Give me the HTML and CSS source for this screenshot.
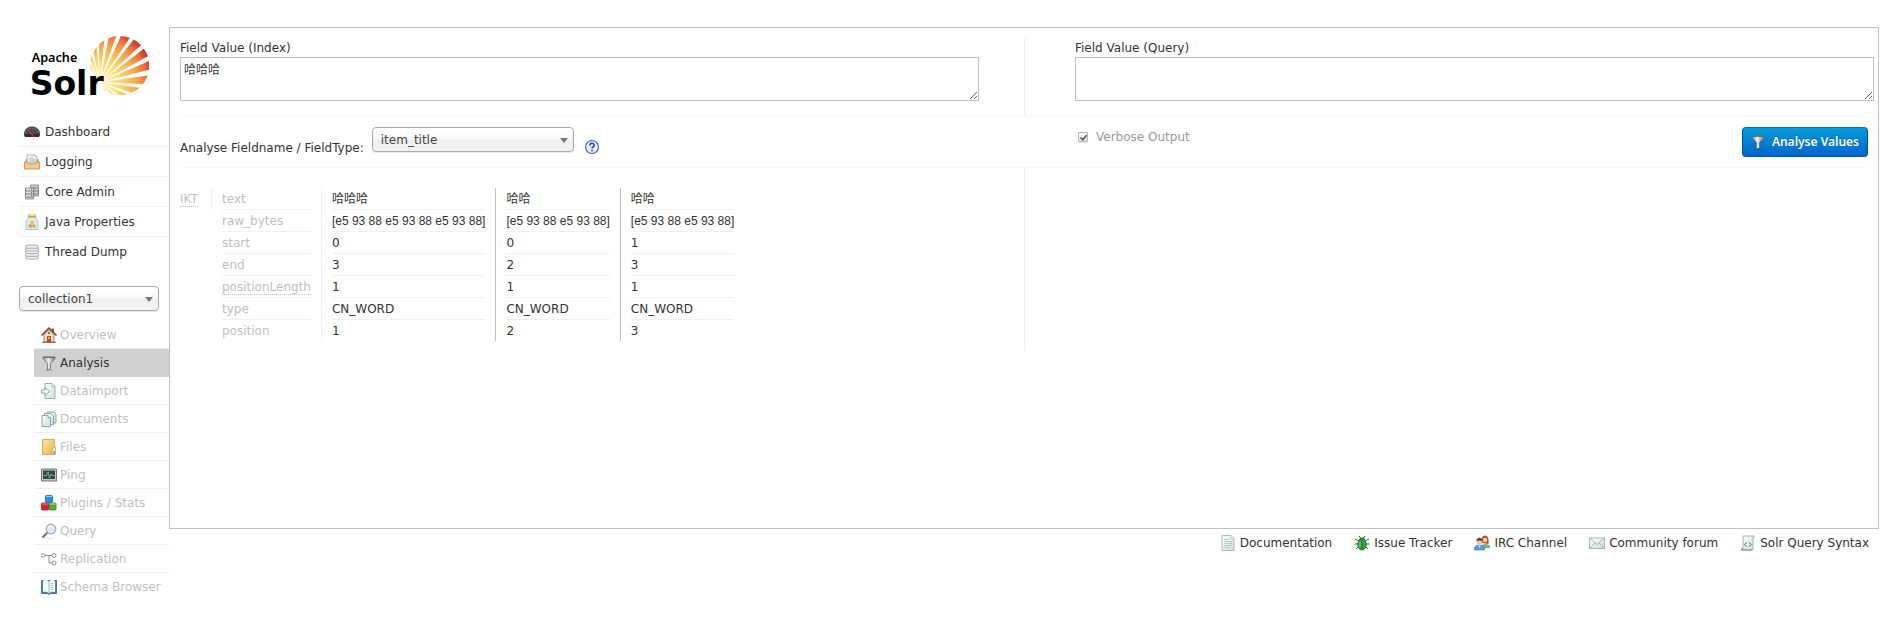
FILE: index.html
```html
<!DOCTYPE html>
<html lang="en">
<head>
    <meta charset="UTF-8">
    <meta name="viewport" content="width=device-width, initial-scale=1.0">
    <title>Solr Admin</title>
    <link rel="stylesheet" href="styles.css">
</head>
<body>
    <!-- shared gradients and the funnel icon -->
    <svg class="defs" width="0" height="0" aria-hidden="true">
        <defs>
            <linearGradient id="paper" x1="0" y1="0" x2="1" y2="1">
                <stop offset="0" stop-color="#ffffff"/>
                <stop offset="1" stop-color="#c9dedd"/>
            </linearGradient>
            <linearGradient id="metal" x1="0" y1="0" x2="1" y2="0">
                <stop offset="0" stop-color="#88888d"/>
                <stop offset=".45" stop-color="#f0f0f0"/>
                <stop offset="1" stop-color="#77777c"/>
            </linearGradient>
            <linearGradient id="folder" x1="0" y1="0" x2="1" y2="1">
                <stop offset="0" stop-color="#fbe7a6"/>
                <stop offset="1" stop-color="#e3b64c"/>
            </linearGradient>
            <radialGradient id="flame" gradientUnits="userSpaceOnUse" cx="0" cy="0" r="165">
                <stop offset="0" stop-color="#fff8c8"/>
                <stop offset=".35" stop-color="#fddc70"/>
                <stop offset=".65" stop-color="#f6a850"/>
                <stop offset=".85" stop-color="#e8743a"/>
                <stop offset="1" stop-color="#c92d2c"/>
            </radialGradient>
            <clipPath id="disc">
                <circle cx="359" cy="137" r="89"/>
            </clipPath>
            <symbol id="funnel" viewBox="0 0 16 16">
                <path d="M2 2h12v1.500L9.500 8.500v5.500l-3 1V8.500L2 3.500z" fill="url(#metal)" stroke="#6a6a70" stroke-width=".8"/>
                <path d="M2 2.300h12" stroke="#66666c"/>
                <path d="M4 15.300h8" stroke="#000" stroke-opacity=".2"/>
            </symbol>
        </defs>
    </svg>

    <div class="wrapper">
        <aside class="sidebar">
            <a class="logo" href="#" aria-label="Apache Solr">
                <svg width="130" height="84" viewBox="57 21 390 252">
                    <g clip-path="url(#disc)">
                        <g transform="translate(300 187)" fill="url(#flame)">
                            <path d="M0 0L190-10V10Z" transform="rotate(-121)"/>
                            <path d="M0 0L190-10V10Z" transform="rotate(-110)"/>
                            <path d="M0 0L190-12V12Z" transform="rotate(-99)"/>
                            <path d="M0 0L190-13V13Z" transform="rotate(-88)"/>
                            <path d="M0 0L190-14V14Z" transform="rotate(-75)"/>
                            <path d="M0 0L190-16V16Z" transform="rotate(-61)"/>
                            <path d="M0 0L190-16V16Z" transform="rotate(-47)"/>
                            <path d="M0 0L190-15V15Z" transform="rotate(-33)"/>
                            <path d="M0 0L190-15V15Z" transform="rotate(-19)"/>
                            <path d="M0 0L190-17V17Z" transform="rotate(-3)"/>
                            <path d="M0 0L190-17V17Z" transform="rotate(13)"/>
                            <path d="M0 0L190-17V17Z" transform="rotate(29)"/>
                            <path d="M0 0L190-15V15Z" transform="rotate(45)"/>
                            <path d="M0 0L190-13V13Z" transform="rotate(60)"/>
                        </g>
                    </g>
                    <text class="logo-top" x="95" y="126">Apache</text>
                    <text class="logo-name" x="89" y="224">Solr</text>
                </svg>
            </a>

            <nav>
                <ul class="menu">
                    <li><a href="#">
                        <svg class="icon" viewBox="0 0 16 16"><path d="M0 10C0 0 16 0 16 10l-1 3H1z" fill="#4a4a50"/><path d="M2 9.500C3 2.500 13 2.500 14 9.500" fill="none" stroke="#9a9aa0" stroke-dasharray="1 2"/><path d="M0 10h16l-1 3H1z" fill="#2f2f33"/><path d="M4 6l6 7" stroke="#e02424" stroke-width="1.300"/></svg>
                        Dashboard</a></li>
                    <li><a href="#">
                        <svg class="icon" viewBox="0 0 16 16"><path d="M2 5h12l1.500 5h-15z" fill="#d99a5c"/><path d="M3 1h8l2 2v8H3z" fill="url(#paper)" stroke="#8eabaa" stroke-width=".8"/><path d="M5 4h4M5 6h6M5 8h6" stroke="#8fb5b5" stroke-width=".8"/><path d="M.5 8H4l1 2h6l1-2h3.500v7H.5z" fill="#f3c692" stroke="#c98645" stroke-width=".8"/></svg>
                        Logging</a></li>
                    <li><a href="#">
                        <svg class="icon" viewBox="0 0 16 16"><path d="M6.500 1h8v11h-8z" fill="#c9d0cf" stroke="#777" stroke-width=".8"/><path d="M7 4h7M7 7h7M7 10h7" stroke="#777"/><path d="M1.500 4h8v11h-8z" fill="#dde2e2" stroke="#777" stroke-width=".8"/><path d="M2 7h7M2 10h7M2 13h7" stroke="#777"/><path d="M7 5.500h1M7 8.500h1M7 11.500h1" stroke="#3a9c4a"/></svg>
                        Core Admin</a></li>
                    <li><a href="#">
                        <svg class="icon" viewBox="0 0 16 16"><path d="M4 3h8v1.500l2 2.500v8.500H2V7l2-2.500z" fill="#d9eaf8" stroke="#94b5d3" stroke-width=".8"/><path d="M4 .5h8v3H4z" fill="#dba72f"/><path d="M4.500 1.500h7" stroke="#f9dc85"/><circle cx="8" cy="8.500" r="2" fill="#e9bd55"/><circle cx="6.300" cy="12" r="2" fill="#dba94a"/><circle cx="9.800" cy="12" r="2" fill="#e4b453"/></svg>
                        Java Properties</a></li>
                    <li><a href="#">
                        <svg class="icon" viewBox="0 0 16 16" fill="#f2f2f2" stroke="#a5a5a5" stroke-width=".9"><rect x="1.500" y="12" width="13" height="3" rx="1.500"/><rect x="1.500" y="9.300" width="13" height="3" rx="1.500"/><rect x="1.500" y="6.600" width="13" height="3" rx="1.500"/><rect x="1.500" y="3.900" width="13" height="3" rx="1.500"/><rect x="1.500" y="1.200" width="13" height="3" rx="1.500"/></svg>
                        Thread Dump</a></li>
                </ul>

                <div class="select core-select">
                    <select aria-label="Core Selector">
                        <option>collection1</option>
                    </select>
                </div>

                <ul class="submenu">
                    <li><a href="#">
                        <svg class="icon" viewBox="0 0 16 16"><path d="M3 7.500L8 3l5 4.500V15H3z" fill="#f4dfc8" stroke="#8a6244" stroke-width=".8"/><path d="M11 1.500h2v4h-2z" fill="#a5522c"/><path d="M.5 8.500L8 1l7.500 7.500" fill="none" stroke="#75452f" stroke-width="1.500"/><path d="M6 9h4v6.500H6z" fill="#b84a20"/><path d="M7 10h2v2H7z" fill="#f1ae42"/><circle cx="8" cy="6" r="1" fill="#764a2d"/><path d="M1 15.300h14" stroke="#8a6244"/></svg>
                        Overview</a></li>
                    <li class="active"><a href="#">
                        <svg class="icon"><use href="#funnel"/></svg>
                        Analysis</a></li>
                    <li><a href="#">
                        <svg class="icon" viewBox="0 0 16 16"><path d="M4 .5h7l3 3v12H4z" fill="url(#paper)" stroke="#8eaaa9" stroke-width=".9"/><path d="M11 .5v3h3" fill="#fff" stroke="#8eaaa9" stroke-width=".8"/><path d="M.5 7H4V4.500L8.500 8.500 4 12.500V10H.5z" fill="#fff" stroke="#789b9a" stroke-width=".9"/></svg>
                        Dataimport</a></li>
                    <li><a href="#">
                        <svg class="icon" viewBox="0 0 16 16" fill="url(#paper)" stroke="#7fa09f" stroke-width=".9"><path d="M6 1h7l2 2v9H6z"/><path d="M3.500 2.500h7l2 2v9h-9z"/><path d="M1 4.500h6l2.500 2.500v8.500H1z"/><path d="M7 4.500V7h2.500"/></svg>
                        Documents</a></li>
                    <li><a href="#">
                        <svg class="icon" viewBox="0 0 16 16"><path d="M1.500.5h12v15h-12z" fill="url(#folder)" stroke="#d0a950" stroke-width=".9"/><path d="M11 15.500V11l1.500-3h2v7.500z" fill="#f4d684" stroke="#d0a950" stroke-width=".8"/><path d="M12.500 12h1.500v3h-1.500z" fill="#45b9e6"/><path d="M12.700 9.500h1.300v2h-1.300z" fill="#fff"/></svg>
                        Files</a></li>
                    <li><a href="#">
                        <svg class="icon" viewBox="0 0 16 16"><path d="M.5 2h15v12H.5z" fill="#c7c7c7" stroke="#777"/><path d="M2 3.500h12v8.500H2z" fill="#3d4547"/><path d="M2.500 8.500h3L7 5l1.500 6L10 7l1 1.500h2.500" fill="none" stroke="#55d0a0" stroke-width=".9"/></svg>
                        Ping</a></li>
                    <li><a href="#">
                        <svg class="icon" viewBox="0 0 16 16"><rect x="4.500" y=".5" width="7" height="7" rx="1" fill="#2692d8" stroke="#176ca9" stroke-width=".8"/><path d="M5 1.500h6" stroke="#8fd0f4"/><rect x=".5" y="8" width="7" height="7" rx="1" fill="#df1f33" stroke="#a60f20" stroke-width=".8"/><path d="M1 9h6" stroke="#f37f8a"/><rect x="8" y="8" width="7" height="7" rx="1" fill="#55ad32" stroke="#347b1b" stroke-width=".8"/><path d="M8.500 9h6" stroke="#a9e08b"/></svg>
                        Plugins / Stats</a></li>
                    <li><a href="#">
                        <svg class="icon" viewBox="0 0 16 16"><path d="M3 15.300h10" stroke="#000" stroke-opacity=".12"/><path d="M1.500 14.500L6.500 9.500" stroke="#77777c" stroke-width="2.200"/><circle cx="10" cy="6" r="4.800" fill="#dcebf9" stroke="#a4a9b2" stroke-width="1.200"/><path d="M7 5.500C8 3 11 3 12.500 4" fill="none" stroke="#fff" stroke-width="1.200"/></svg>
                        Query</a></li>
                    <li><a href="#">
                        <svg class="icon" viewBox="0 0 16 16" fill="#fff" stroke="#8e8e8e"><path d="M4 4.500h7M8 4.500v7.500h3" fill="none"/><circle cx="2.300" cy="4.500" r="1.700"/><circle cx="13" cy="4.500" r="2"/><circle cx="13" cy="12" r="2"/></svg>
                        Replication</a></li>
                    <li><a href="#">
                        <svg class="icon" viewBox="0 0 16 16"><path d="M.5 1.500h15v13h-6L8 15.500l-1.500-1h-6z" fill="#4f84a7" stroke="#33617f" stroke-width=".8"/><path d="M2 1.500C5 .5 7 1 8 2.500 9 1 11 .5 14 1.500v11.500c-3-.5-5 0-6 1.500-1-1.500-3-2-6-1.500z" fill="#f4fafc"/><path d="M8 2.500v12" stroke="#8ba6b4" stroke-width=".8"/><path d="M9.500 4.500h3M9.500 6.500h3M9.500 8.500h3M9.500 10.500h3" stroke="#a2b9c1" stroke-width=".8"/></svg>
                        Schema Browser</a></li>
                </ul>
            </nav>
        </aside>

        <div class="main">
            <main class="content">
                <form class="analysis-form">
                    <div class="fields">
                        <div class="field field-index">
                            <label for="fieldIndex">Field Value (Index)</label>
                            <textarea id="fieldIndex">哈哈哈</textarea>
                        </div>
                        <div class="field field-query">
                            <label for="fieldQuery">Field Value (Query)</label>
                            <textarea id="fieldQuery"></textarea>
                        </div>
                    </div>
                    <div class="settings">
                        <div class="type">
                            <label for="fieldType">Analyse Fieldname / FieldType:</label>
                            <div class="select type-select">
                                <select id="fieldType">
                                    <option>item_title</option>
                                </select>
                            </div>
                            <a class="help" href="#" aria-label="Schema Browser">
                                <svg class="icon" viewBox="0 0 16 16"><circle cx="8" cy="8" r="6.500" fill="#e4ecfa" stroke="#3f63cf" stroke-width="1.200"/><path d="M5.800 6.500C5.800 3.600 10.200 3.700 10.200 6.300 10.200 7.900 8 7.900 8 9.500" fill="none" stroke="#2145b5" stroke-width="1.500"/><path d="M7.200 10.700h1.600v1.500H7.200z" fill="#2145b5"/></svg>
                            </a>
                        </div>
                        <div class="run">
                            <label class="verbose"><input type="checkbox" checked> Verbose Output</label>
                            <button type="submit" class="primary">
                                <svg class="icon"><use href="#funnel"/></svg>
                                Analyse Values
                            </button>
                        </div>
                    </div>
                </form>

                <div class="results">
                    <div class="result-index">
                        <table>
                            <tbody>
                                <tr>
                                    <th class="analyzer"><div><abbr>IKT</abbr></div></th>
                                    <th><div>text</div></th>
                                    <td><div>哈哈哈</div></td>
                                    <td><div>哈哈</div></td>
                                    <td><div>哈哈</div></td>
                                </tr>
                                <tr class="raw">
                                    <td></td>
                                    <th><div>raw_bytes</div></th>
                                    <td><div>[e5 93 88 e5 93 88 e5 93 88]</div></td>
                                    <td><div>[e5 93 88 e5 93 88]</div></td>
                                    <td><div>[e5 93 88 e5 93 88]</div></td>
                                </tr>
                                <tr>
                                    <td></td>
                                    <th><div>start</div></th>
                                    <td><div>0</div></td>
                                    <td><div>0</div></td>
                                    <td><div>1</div></td>
                                </tr>
                                <tr>
                                    <td></td>
                                    <th><div>end</div></th>
                                    <td><div>3</div></td>
                                    <td><div>2</div></td>
                                    <td><div>3</div></td>
                                </tr>
                                <tr>
                                    <td></td>
                                    <th><div><abbr>positionLength</abbr></div></th>
                                    <td><div>1</div></td>
                                    <td><div>1</div></td>
                                    <td><div>1</div></td>
                                </tr>
                                <tr>
                                    <td></td>
                                    <th><div>type</div></th>
                                    <td><div>CN_WORD</div></td>
                                    <td><div>CN_WORD</div></td>
                                    <td><div>CN_WORD</div></td>
                                </tr>
                                <tr>
                                    <td></td>
                                    <th><div>position</div></th>
                                    <td><div>1</div></td>
                                    <td><div>2</div></td>
                                    <td><div>3</div></td>
                                </tr>
                            </tbody>
                        </table>
                    </div>
                </div>
            </main>

            <footer class="footer">
                <a href="#">
                    <svg class="icon" viewBox="0 0 16 16"><path d="M2 .5h9l3 3v12H2z" fill="url(#paper)" stroke="#a3b8b7" stroke-width=".9"/><path d="M11 .5v3h3" fill="#fff" stroke="#a3b8b7" stroke-width=".8"/><path d="M4 4.500h5M4 6.500h8M4 8.500h8M4 10.500h8M4 12.500h6" stroke="#a9bfbe" stroke-width=".8"/></svg>
                    Documentation</a>
                <a href="#">
                    <svg class="icon" viewBox="0 0 16 16"><path d="M1 4l4 2M15 4l-4 2M.5 9H5M15.500 9H11M2 14l3-3M14 14l-3-3M5 1l2 2.500M11 1L9 3.500" stroke="#286b32"/><ellipse cx="8" cy="9.500" rx="4.300" ry="5.500" fill="#43a047" stroke="#206a2a" stroke-width=".8"/><path d="M4.800 5c0-3.500 6.400-3.500 6.400 0z" fill="#2f7f38"/><path d="M8 5.500v9" stroke="#1d6427"/><path d="M6 7v5" stroke="#8fd68f"/></svg>
                    Issue Tracker</a>
                <a href="#">
                    <svg class="icon" viewBox="0 0 16 16"><path d="M7 14v-2c0-4 9-4 9 0v1z" fill="#6cb98a"/><path d="M8 8c-1-4 0-7.500 3-7.500S15 4 14.500 9z" fill="#a8572c"/><circle cx="11" cy="5" r="2.300" fill="#f2c49e"/><path d="M.5 15v-2c0-4 10-4 10 0v2z" fill="#5e9be0" stroke="#3b73b8" stroke-width=".6"/><path d="M4.500 10.500h2L5.500 13z" fill="#fff"/><circle cx="5.500" cy="6.800" r="2.800" fill="#f2c49e"/><path d="M2.500 6.500c-.5-5 6.500-5 6 0-2-1.500-4-1.500-6 0z" fill="#684027"/></svg>
                    IRC Channel</a>
                <a href="#">
                    <svg class="icon" viewBox="0 0 16 16"><path d="M.5 3h15v10.500H.5z" fill="url(#paper)" stroke="#9eb2b1" stroke-width=".9"/><path d="M.5 3L8 9.500 15.500 3M.5 13.500L6 8M15.500 13.500L10 8" fill="none" stroke="#9eb2b1" stroke-width=".9"/></svg>
                    Community forum</a>
                <a href="#">
                    <svg class="icon" viewBox="0 0 16 16"><path d="M3 1h11v1.500h-1V15H1.500v-1.500H3z" fill="url(#paper)" stroke="#9bacab" stroke-width=".9"/><path d="M1 15h11" stroke="#81908f"/><path d="M6.500 7.500L4.500 9.500l2 2M9 7.500l2 2-2 2" fill="none" stroke="#555"/></svg>
                    Solr Query Syntax</a>
            </footer>
        </div>
    </div>
</body>
</html>
```
FILE: styles.css
```css
* {
    box-sizing: border-box;
}
body {
    margin: 0;
    background: #fff;
    color: #333;
    font-family: Verdana, 'DejaVu Sans', 'Noto Sans CJK SC', sans-serif;
    font-size: 12px;
    line-height: 18px;
}
a {
    color: #333;
    text-decoration: none;
}
ul {
    list-style: none;
    margin: 0;
    padding: 0;
}
select, textarea, button {
    font: inherit;
    color: inherit;
}
.defs {
    position: absolute;
}
.icon {
    width: 16px;
    height: 16px;
    flex: none;
}
.wrapper {
    display: flex;
    padding: 27px 11px 24px 19px;
}

/* sidebar */
.sidebar {
    width: 150px;
    flex: none;
}
.logo {
    display: block;
    height: 90px;
}
.logo svg {
    display: block;
}
.logo-top {
    font-family: 'Noto Sans', 'Open Sans', sans-serif;
    font-size: 38px;
    font-weight: 600;
}
.logo-name {
    font-family: 'DejaVu Sans', sans-serif;
    font-size: 99px;
    font-weight: bold;
}
.menu a {
    display: flex;
    align-items: center;
    gap: 5px;
    height: 29px;
    padding-left: 5px;
}
.menu li {
    border-bottom: 1px solid #f0f0f0;
}
.menu li:last-child {
    border-bottom: none;
}
.submenu {
    margin: 10px 0 0 15px;
}
.submenu a {
    display: flex;
    align-items: center;
    gap: 3px;
    height: 27px;
    padding-left: 7px;
    color: #c0c0c0;
    white-space: nowrap;
}
.submenu li {
    border-bottom: 1px solid #f0f0f0;
}
.submenu li:last-child {
    border-bottom: none;
}
.submenu .active {
    background: #d0d0d0;
    border-color: #d0d0d0;
}
.submenu .active a {
    color: #333;
}

/* dropdowns */
.select {
    position: relative;
}
.select select {
    appearance: none;
    display: block;
    width: 100%;
    height: 25px;
    padding: 0 24px 0 8px;
    border: 1px solid #aaa;
    border-radius: 4px;
    background: linear-gradient(#fff 20%, #f6f6f6 50%, #eee 52%, #f4f4f4 100%);
    box-shadow: 0 1px 1px rgba(0, 0, 0, 0.1);
    color: #444;
}
.select::after {
    content: "";
    position: absolute;
    top: 11px;
    right: 6px;
    border: 4px solid transparent;
    border-top: 5px solid #777;
    border-bottom: 0;
    pointer-events: none;
}
.core-select {
    width: 140px;
    margin-top: 20px;
}
.type-select {
    width: 202px;
}

/* content */
.main {
    flex: 1;
    min-width: 0;
}
.content {
    min-height: 502px;
    padding: 10px;
    border: 1px solid #c0c0c0;
}
.fields, .settings, .results {
    display: grid;
    grid-template-columns: calc(50% + 1px) 1fr;
}
.fields, .settings {
    border-bottom: 1px solid #f8f8f8;
}
.field label {
    display: block;
    height: 19px;
    line-height: 20px;
}
.field textarea {
    display: block;
    width: 100%;
    height: 44px;
    padding: 4px 3px;
    border: 1px solid #c0c0c0;
    line-height: 16px;
}
.field-index {
    padding: 0 45px 15px 0;
    border-right: 1px solid #f0f0f0;
}
.field-query {
    margin: 0 -6px 0 50px;
}
.settings {
    padding: 10px 0;
}
.type {
    display: flex;
    align-items: flex-start;
    gap: 8px;
}
.type label {
    padding-top: 12px;
}
.help {
    display: flex;
    padding: 12px 0 0 2px;
}
.run {
    display: flex;
    justify-content: space-between;
    align-items: flex-start;
    padding-left: 53px;
}
.verbose {
    display: flex;
    align-items: center;
    gap: 8px;
    height: 20px;
    color: #999;
}
.verbose input {
    appearance: none;
    display: grid;
    justify-content: center;
    width: 10px;
    height: 10px;
    margin: 0;
    border: 1px solid #b4b4b4;
    border-radius: 1px;
    background: linear-gradient(#fff, #e2e2e2);
    box-shadow: 0 1px 1px rgba(0, 0, 0, 0.1);
}
.verbose input:checked::after {
    content: "";
    width: 3px;
    height: 6px;
    border: solid #555;
    border-width: 0 2px 2px 0;
    box-sizing: content-box;
    transform: rotate(40deg) scale(0.8);
}
.primary {
    display: flex;
    align-items: center;
    gap: 6px;
    height: 30px;
    padding: 0 8px 0 7px;
    border: 1px solid #0056a6;
    border-top-color: #0076b8;
    border-radius: 4px;
    background: linear-gradient(#049cdb, #0064cd);
    color: #fff;
    font-family: 'Noto Sans', 'Open Sans', sans-serif;
    font-weight: 600;
    text-shadow: 0 -1px 0 rgba(0, 0, 0, 0.25);
    cursor: pointer;
}

/* analysis table */
.result-index {
    padding: 20px 0 10px;
    border-right: 1px solid #f0f0f0;
}
table {
    border-collapse: separate;
    border-spacing: 0;
}
th, td {
    padding: 0 10px;
    text-align: left;
    font-weight: normal;
    white-space: nowrap;
}
th {
    color: #c0c0c0;
}
th div, td div {
    height: 22px;
    line-height: 22px;
    border-bottom: 1px solid #f0f0f0;
}
tr:last-child div {
    height: 21px;
    border-bottom: none;
}
th + td {
    border-left: 1px solid #f0f0f0;
}
td + td {
    border-left: 1px solid #c0c0c0;
}
.analyzer {
    padding-left: 0;
    border-right: 1px solid #f0f0f0;
}
.analyzer div {
    min-width: 21px;
    border-bottom: none;
}
abbr {
    border-bottom: 1px dotted #c0c0c0;
}
.raw td {
    font-family: 'Liberation Sans', Arial, sans-serif;
}

/* footer */
.footer {
    display: flex;
    justify-content: flex-end;
    gap: 22px;
    padding: 5px 10px 0;
}
.footer a {
    display: flex;
    align-items: center;
    gap: 4px;
}
@media (max-width: 900px) {
    .footer {
        flex-wrap: wrap;
    }
}
```
